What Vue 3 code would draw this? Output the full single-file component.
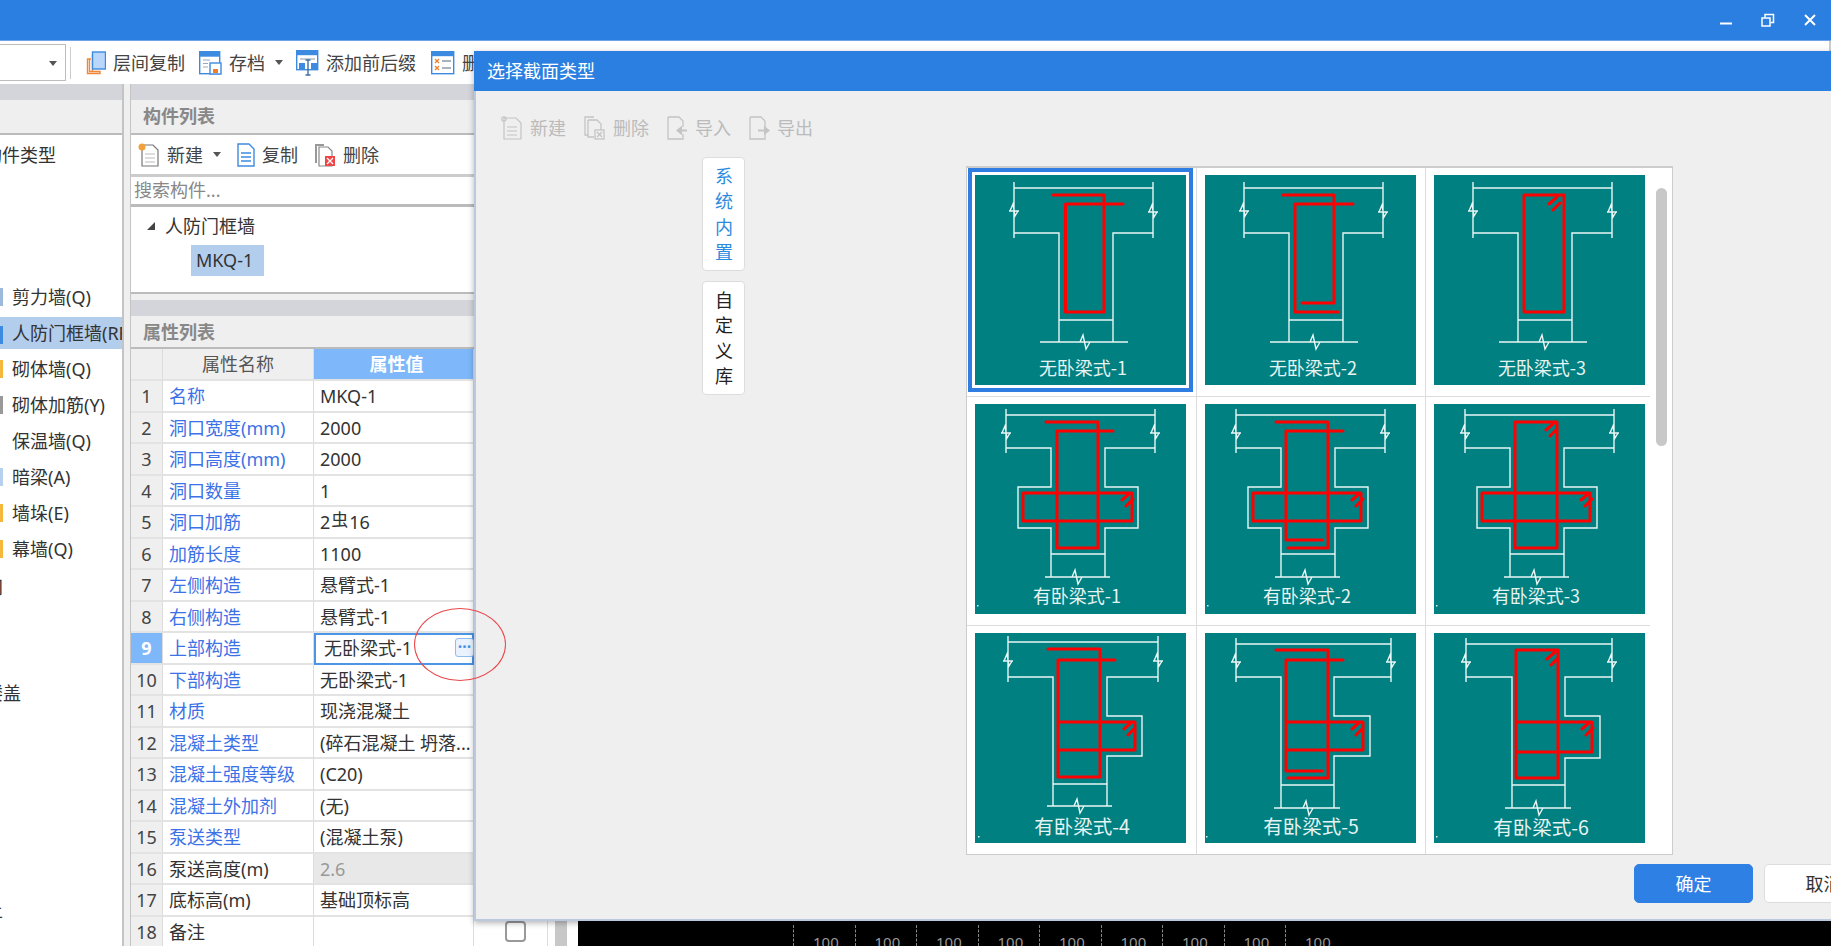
<template>
  <div class="app">
    <!-- 顶部标题栏 -->
    <header class="topbar">
      <div class="win-btns">
        <svg width="14" height="14" viewBox="0 0 14 14"><path d="M1 10.500h12" stroke="#fff" stroke-width="2" /></svg>
        <svg width="14" height="14" viewBox="0 0 14 14" fill="none" stroke="#fff" stroke-width="1.500"><rect x="1" y="5" width="8" height="8" /><path d="M4 4.500V1.500h8.500v8H9.500" /></svg>
        <svg width="14" height="14" viewBox="0 0 14 14"><path d="M2 2l10 10M12 2L2 12" stroke="#fff" stroke-width="2" /></svg>
      </div>
    </header>

    <div class="toolbar">
      <div class="combo"><i class="caret"></i></div>
      <span class="tool-sep"></span>
      <div class="tool first">
        <svg width="20" height="24" viewBox="0 0 20 24" fill="none"><path d="M5 8H1.500v14.500H14v-2H3.500V8zM6.500 4v16" stroke="#f0883a" stroke-width="1.400" /><rect x="6.500" y="1" width="13" height="17" fill="#b9d6fb" stroke="#3d8be0" stroke-width="1.400" /></svg>
        <span>层间复制</span>
      </div>
      <div class="tool">
        <svg width="23" height="24" viewBox="0 0 23 24"><rect x=".7" y=".7" width="20" height="22" fill="#fff" stroke="#3d8be0" stroke-width="1.400" /><rect x=".7" y=".7" width="20" height="5" fill="#3d8be0" /><path d="M4 9h7M4 12.500h5M4 16h5" stroke="#9aa7b5" /><rect x="11" y="12" width="11" height="11" fill="#fff" stroke="#3d8be0" stroke-width="1.400" /><rect x="14" y="18" width="5" height="4" fill="#ef7d2c" /></svg>
        <span>存档</span>
        <i class="caret small-gap"></i>
      </div>
      <div class="tool tight">
        <svg width="23" height="26" viewBox="0 0 23 26"><rect x=".7" y=".7" width="21" height="19" fill="#fff" stroke="#3d8be0" stroke-width="1.400" /><rect x=".7" y=".7" width="21" height="4.500" fill="#3d8be0" /><path d="M4 9h15" stroke="#8b9aa8" /><rect x="3" y="13" width="6" height="7" fill="#3d8be0" /><rect x="15" y="13" width="7" height="7" fill="#3d8be0" /><path d="M12 10v15M9.500 25h5M9.500 10h5" stroke="#3d6fa8" stroke-width="1.400" /></svg>
        <span>添加前后缀</span>
      </div>
      <div class="tool">
        <svg width="24" height="24" viewBox="0 0 24 24"><rect x=".7" y=".7" width="22" height="22" fill="#fff" stroke="#3d8be0" stroke-width="1.400" /><rect x=".7" y=".7" width="22" height="4.500" fill="#3d8be0" /><path d="M4 8l4 4M8 8l-4 4M4 15l4 4M8 15l-4 4" stroke="#ef7d2c" stroke-width="1.300" /><path d="M11 10h9M11 17h9" stroke="#8b9aa8" stroke-width="1.300" /></svg>
        <span>删</span>
      </div>
    </div>

    <main class="main">
      <!-- 左侧：构件类型 -->
      <aside class="type-panel">
        <div class="band"></div>
        <div class="panel-head"></div>
        <div class="type-list">
          <div class="type-root">构件类型</div>
          <div v-for="t in types" :key="t.name" :class="['type-row', { on: t.on }]">
            <i class="type-mark" :style="{ background: t.color }"></i>{{ t.name }}
          </div>
          <div class="cut cut-a">间</div>
          <div class="cut cut-b">楼盖</div>
          <div class="cut cut-c">土</div>
        </div>
      </aside>
      <div class="splitter"></div>

      <!-- 中间：构件列表 + 属性列表 -->
      <section class="mid">
        <div class="band"></div>
        <div class="panel-head title">构件列表</div>
        <div class="mid-tools">
          <div class="tool">
            <svg width="22" height="24" viewBox="0 0 22 24" fill="none"><path d="M4 2h11l5 5v16H4z" fill="#fff" stroke="#777" stroke-width="1.200" /><path d="M7 11h10M7 15h10M7 19h10" stroke="#bbb" /><circle cx="4" cy="4" r="3.500" fill="#f2a23c" /></svg>
            <span>新建</span>
            <i class="caret small-gap"></i>
          </div>
          <div class="tool">
            <svg width="18" height="24" viewBox="0 0 18 24" fill="none"><path d="M1 4V1h11l5 5v17H1z" fill="#fff" stroke="#3d8be0" stroke-width="1.400" /><path d="M4 10h10M4 14h10M4 18h10" stroke="#3d8be0" stroke-width="1.300" /></svg>
            <span>复制</span>
          </div>
          <div class="tool">
            <svg width="22" height="24" viewBox="0 0 22 24" fill="none"><path d="M1 1h9v2H3v17H1z" fill="#999" /><path d="M5 4h9l4 4v15H5z" fill="#fff" stroke="#888" stroke-width="1.200" /><rect x="11" y="13" width="10" height="10" fill="#e44" /><path d="M13 15l6 6M19 15l-6 6" stroke="#fff" stroke-width="1.300" /></svg>
            <span>删除</span>
          </div>
        </div>
        <div class="search">搜索构件...</div>
        <div class="tree">
          <div class="tree-root"><i class="tree-arrow"></i>人防门框墙</div>
          <div class="tree-leaf"><span>MKQ-1</span></div>
        </div>
        <div class="gap"></div>
        <div class="band"></div>
        <div class="panel-head title props">属性列表</div>
        <div class="prop-table">
          <div class="prop-row head">
            <div class="num"></div>
            <div class="name">属性名称</div>
            <div class="val">属性值</div>
          </div>
          <div v-for="(p, i) in props" :key="p.name" :class="['prop-row', { active: i === 8, locked: p.locked }]">
            <div class="num">{{ i + 1 }}</div>
            <div :class="['name', { link: !p.plain }]">{{ p.name }}</div>
            <div class="val">
              <template v-if="p.rebar">2<span class="rebar">虫</span>16</template>
              <template v-else>{{ p.val }}</template>
              <span v-if="i === 8" class="more">···</span>
            </div>
          </div>
        </div>
      </section>

      <!-- 后面被弹窗挡住的区域，只露出底部一条 -->
      <section class="work">
        <div class="check-col"><span class="check"></span></div>
        <div class="scroll-col"><span></span></div>
        <div class="canvas">
          <div class="ruler">
            <span v-for="n in 9" :key="n">100</span>
          </div>
        </div>
      </section>
    </main>

    <!-- 选择截面类型弹窗 -->
    <div class="dialog">
      <div class="dialog-title">选择截面类型</div>
      <div class="dialog-tools">
        <div class="dtool">
          <svg width="22" height="24" viewBox="0 0 22 24" fill="none" stroke="#c4c4c4" stroke-width="1.200"><path d="M3 2h12l5 5v16H3z" /><path d="M6 11h10M6 15h10M6 19h10" /><circle cx="3" cy="3" r="2.200" /></svg>
          <span>新建</span>
        </div>
        <div class="dtool">
          <svg width="22" height="24" viewBox="0 0 22 24" fill="none" stroke="#c4c4c4" stroke-width="1.300"><path d="M10 1H1v18h3" /><path d="M4 4h9l4 4v6M10 21H4V4" /><rect x="11" y="14" width="9" height="9" /><path d="M13 16l5 5M18 16l-5 5" /></svg>
          <span>删除</span>
        </div>
        <div class="dtool">
          <svg width="21" height="24" viewBox="0 0 21 24" fill="none" stroke="#c4c4c4" stroke-width="1.300"><path d="M1 1h11l4 4v6M16 18v5H1V1" /><path d="M20 14.500h-7" stroke-width="2" /><path d="M15 10.500l-5 4 5 4" fill="#c4c4c4" /></svg>
          <span>导入</span>
        </div>
        <div class="dtool">
          <svg width="21" height="24" viewBox="0 0 21 24" fill="none" stroke="#c4c4c4" stroke-width="1.300"><path d="M1 1h11l4 4v6M16 18v5H1V1" /><path d="M9 14.500h7" stroke-width="2" /><path d="M15 10.500l5 4-5 4" fill="#c4c4c4" /></svg>
          <span>导出</span>
        </div>
      </div>

      <div class="dialog-body">
        <div class="lib-tabs">
          <div class="lib-tab on">系统内置</div>
          <div class="lib-tab">自定义库</div>
        </div>
        <div class="gallery">
          <div class="gallery-grid">
            <div v-for="(c, i) in cards" :key="c.label" class="cell">
              <svg :class="['thumb', { picked: i === 0 }]" width="211" height="210" viewBox="0 0 211 210">
                <rect width="211" height="210" fill="#008080" />
                <path :d="c.white" fill="none" stroke="#e9f6f5" stroke-width="1.400" />
                <path :d="c.red" fill="none" stroke="#f00" stroke-width="3" stroke-linejoin="round" stroke-linecap="round" />
                <rect v-if="c.dot" :x="c.dot[0]" :y="c.dot[1]" width="1.500" height="1.500" fill="#dff0ef" />
                <text :x="c.tx" :y="c.ty" :class="['thumb-label', { wide: i > 5 }]" text-anchor="middle">{{ c.label }}</text>
              </svg>
            </div>
          </div>
          <div class="gallery-track"><span></span></div>
        </div>
      </div>

      <div class="dialog-foot">
        <button class="btn primary">确定</button>
        <button class="btn">取消</button>
      </div>
    </div>

    <!-- 截图上手工画的红圈 -->
    <div class="mark-circle"></div>
  </div>
</template>

<script setup>
const types = [
  { name: '剪力墙(Q)', color: '#9db9dc' },
  { name: '人防门框墙(RFM)', color: '#3d8be0', on: true },
  { name: '砌体墙(Q)', color: '#f5b83d' },
  { name: '砌体加筋(Y)', color: '#999' },
  { name: '保温墙(Q)', color: 'transparent' },
  { name: '暗梁(A)', color: '#b6d0ee' },
  { name: '墙垛(E)', color: '#f5b83d' },
  { name: '幕墙(Q)', color: '#f5b83d' }
]

const props = [
  { name: '名称', val: 'MKQ-1' },
  { name: '洞口宽度(mm)', val: '2000' },
  { name: '洞口高度(mm)', val: '2000' },
  { name: '洞口数量', val: '1' },
  { name: '洞口加筋', rebar: true },
  { name: '加筋长度', val: '1100' },
  { name: '左侧构造', val: '悬臂式-1' },
  { name: '右侧构造', val: '悬臂式-1' },
  { name: '上部构造', val: '无卧梁式-1' },
  { name: '下部构造', val: '无卧梁式-1' },
  { name: '材质', val: '现浇混凝土' },
  { name: '混凝土类型', val: '(碎石混凝土 坍落...' },
  { name: '混凝土强度等级', val: '(C20)' },
  { name: '混凝土外加剂', val: '(无)' },
  { name: '泵送类型', val: '(混凝土泵)' },
  { name: '泵送高度(m)', val: '2.6', plain: true, locked: true },
  { name: '底标高(m)', val: '基础顶标高', plain: true },
  { name: '备注', val: '', plain: true }
]

// 折断线符号
const sideBreak = (x, y) => `M${x - 5} ${y + 2}H${x + 5}M${x - 4} ${y + 2}L${x - 1} ${y - 5}L${x + 1} ${y + 7}L${x + 4} ${y + 2}`
const footBreak = (x, y) => `M${x - 5} ${y}L${x - 2} ${y - 7}L${x + 1} ${y + 7}L${x + 5} ${y}`
const hook = (x, y) => `M${x - 8} ${y + 7}L${x} ${y}M${x - 4} ${y + 13}L${x + 3} ${y + 6}`

const teeWhite = 'M39 7V63M39 13H178M178 7V63M39 58H84V167M178 58H138V167M84 145H138M65 167H153' + sideBreak(39, 34) + sideBreak(178, 35) + footBreak(110, 167)
const crossWhite = 'M31 5V49M31 11H180M180 5V49M31 44H76V83H43V124H76V173M180 44H130V83H163V124H130V173M76 150H130M70 173H135' + sideBreak(31, 27) + sideBreak(180, 27) + footBreak(102, 173)

const cards = [
  { label: '无卧梁式-1', tx: 108, ty: 200, white: teeWhite, red: 'M78 20H129V137H90.500V29H148' },
  { label: '无卧梁式-2', tx: 108, ty: 200, white: teeWhite, red: 'M78 20H129V128H97M148 29H90V137H133' },
  { label: '无卧梁式-3', tx: 108, ty: 200, white: teeWhite, red: 'M90 20H130V137H90Z' + hook(123, 22) },
  { label: '有卧梁式-1', tx: 102, ty: 199, dot: [2, 201], white: crossWhite, red: 'M71 18H123V144H82V27H138M48 89H157V117H48Z' + hook(155, 89) },
  { label: '有卧梁式-2', tx: 102, ty: 199, dot: [2, 201], white: crossWhite, red: 'M71 18H123V144H83M138 27H81V136H117M48 89H156V117H48Z' + hook(155, 89) },
  { label: '有卧梁式-3', tx: 102, ty: 199, dot: [2, 201], white: crossWhite, red: 'M81 18H123V144H81ZM48 89H156V117H48Z' + hook(120, 19) + hook(155, 89) },
  {
    label: '有卧梁式-4', tx: 107, ty: 201, dot: [3, 203],
    white: 'M33 3V49M33 9H183M183 3V49M33 44H78V173M183 44H132V83H167V123H132V173M78 151H132M72 173H137' + sideBreak(33, 26) + sideBreak(183, 26) + footBreak(104, 173),
    red: 'M73 16H125V144H83V27H140M83 89H160V117H83' + hook(157, 89)
  },
  {
    label: '有卧梁式-5', tx: 106, ty: 201, dot: [1, 203],
    white: 'M31 5V49M31 11H186M186 5V49M31 44H76V175M186 44H129V83H165V123H129V175M76 152H129M69 175H135' + sideBreak(31, 27) + sideBreak(186, 27) + footBreak(103, 175),
    red: 'M71 17H123V145H83M138 27H81V138H117M81 89H158V117H81' + hook(155, 89)
  },
  {
    label: '有卧梁式-6', tx: 107, ty: 202, dot: [2, 203],
    white: 'M32 5V49M32 11H178M178 5V49M32 44H78V175M178 44H131V83H166V125H131V175M78 152H131M71 175H137' + sideBreak(32, 27) + sideBreak(178, 27) + footBreak(104, 175),
    red: 'M82 17H124V145H82ZM82 89H158V119H82' + hook(121, 19) + hook(156, 89)
  }
]
</script>

<style scoped>
.app {
  position: relative;
  display: flex;
  flex-direction: column;
  width: 1831px;
  height: 946px;
  overflow: hidden;
  background: #fff;
  color: #333;
  font-family: "Noto Sans", "Noto Sans CJK SC", sans-serif;
  font-size: 18px;
  line-height: 1;
}

.topbar {
  flex: 0 0 41px;
  display: flex;
  justify-content: flex-end;
  background: #2b7fe0;
  border-bottom: 1px solid #6ea4e6;
  box-sizing: border-box;
}

.win-btns {
  display: flex;
  gap: 28px;
  padding: 13px 14px 0 0;
  align-items: flex-start;
}

.toolbar {
  flex: 0 0 43px;
  display: flex;
  align-items: center;
  background: #fff;
  border-right: 2px solid #ccc;
  box-sizing: border-box;
  white-space: nowrap;
}

.combo {
  position: relative;
  width: 66px;
  height: 37px;
  border: 1px solid #bdbdbd;
  border-left: none;
  box-sizing: border-box;
  flex: none;
}

.combo .caret {
  position: absolute;
  top: 16px;
  left: 49px;
}

.caret {
  display: inline-block;
  width: 0;
  height: 0;
  border: 4px solid transparent;
  border-top: 5px solid #555;
  border-bottom: none;
}

.small-gap {
  margin-left: 3px;
}

.tool-sep {
  width: 1px;
  height: 32px;
  margin: 0 6px 0 4px;
  background: #ccc;
  flex: none;
}

.tool {
  display: flex;
  align-items: center;
  gap: 7px;
  padding: 0 7px;
  flex: none;
  height: 36px;
  color: #444;
}

.tool.first {
  padding-left: 9px;
}

.tool.tight {
  padding-left: 6px;
  padding-right: 8px;
}

.main {
  flex: 1;
  display: flex;
  min-height: 0;
  overflow: hidden;
}

.band {
  flex: none;
  height: 16px;
  background: #d3d5da;
}

.panel-head {
  flex: none;
  height: 33px;
  background: #efefef;
  border-bottom: 2px solid #bbb;
  box-sizing: content-box;
}

.type-panel {
  flex: 0 0 122px;
  display: flex;
  flex-direction: column;
  overflow: hidden;
  border-right: 2px solid #c4c4c4;
  box-sizing: content-box;
}

.type-list {
  flex: 1;
  position: relative;
  overflow: hidden;
  padding-left: 12px;
  white-space: nowrap;
}

.type-root {
  margin: 10px 0 0 -28px;
  height: 134px;
  line-height: 20px;
}

.type-row {
  position: relative;
  height: 36px;
  line-height: 36px;
  margin-left: -12px;
  padding-left: 12px;
}

.type-row.on {
  height: 32px;
  line-height: 32px;
  margin-top: 2px;
  margin-bottom: 2px;
  background: #b3cdec;
}

.type-mark {
  position: absolute;
  left: 0;
  top: 9px;
  width: 3px;
  height: 18px;
}

.cut {
  position: absolute;
}

.cut-a { left: -15px; top: 443px; }
.cut-b { left: -15px; top: 549px; }
.cut-c { left: -15px; top: 766px; }

.splitter {
  flex: 0 0 6px;
  background: #efefef;
}

.mid {
  flex: 0 0 344px;
  display: flex;
  flex-direction: column;
  border-left: 1px solid #c4c4c4;
  box-sizing: border-box;
  overflow: hidden;
}

.mid > * {
  flex: none;
}

.panel-head.title {
  padding-left: 12px;
  line-height: 33px;
  font-weight: 700;
  color: #888;
}

.panel-head.props {
  height: 31px;
}

.mid-tools {
  height: 39px;
  display: flex;
  align-items: center;
  padding-left: 0;
  border-bottom: 3px solid #ccc;
}

.mid-tools .tool {
  padding: 0 9px 0 7px;
}

.search {
  height: 27px;
  line-height: 27px;
  padding-left: 3px;
  color: #888;
  border-bottom: 3px solid #bbb;
}

.tree {
  height: 85px;
  border-bottom: 2px solid #bbb;
  box-sizing: content-box;
}

.tree-root {
  display: flex;
  align-items: center;
  height: 38px;
  padding-left: 16px;
}

.tree-arrow {
  width: 0;
  height: 0;
  margin-right: 10px;
  border-left: 8px solid transparent;
  border-bottom: 8px solid #444;
}

.tree-leaf {
  padding-left: 60px;
}

.tree-leaf span {
  display: inline-block;
  width: 73px;
  height: 31px;
  line-height: 31px;
  padding-left: 5px;
  box-sizing: border-box;
  background: #b3cdec;
}

.gap {
  height: 6px;
  background: #efefef;
}

.prop-row {
  display: grid;
  grid-template-columns: 32px 151px 1fr;
  height: 31.500px;
  line-height: 30px;
  white-space: nowrap;
}

.prop-row.head {
  height: 32px;
}

.prop-row > div {
  border-bottom: 2px solid #e3e3e3;
  border-right: 1px solid #dcdcdc;
  box-sizing: border-box;
  overflow: hidden;
}

.num {
  background: #efefef;
  text-align: center;
  color: #444;
}

.name {
  padding-left: 6px;
}

.name.link {
  color: #3c72e6;
}

.val {
  position: relative;
  padding-left: 6px;
}

.rebar {
  font-size: 17px;
  position: relative;
  top: -3px;
  margin: 0 1px;
}

.head .num,
.head .name {
  background: #efefef;
}

.head .name {
  text-align: center;
  padding-left: 0;
  color: #555;
}

.head .val {
  background: #7eb8fa;
  color: #fff;
  font-weight: 700;
  text-align: center;
}

.active .num {
  background: #7eb8fa;
  color: #fff;
  font-weight: 700;
}

.prop-row.active .val {
  border: 2px solid #4b94e6;
  padding-left: 8px;
  line-height: 26px;
  overflow: visible;
}

.more {
  position: absolute;
  left: 139px;
  top: 3px;
  width: 19px;
  height: 19px;
  line-height: 15px;
  text-align: center;
  font-size: 16px;
  font-weight: 700;
  color: #4b94e6;
  background: #eaf3fd;
  border: 1px solid #8fbdf0;
  border-radius: 3px;
  box-sizing: border-box;
}

.locked .val {
  background: #e8e8e8;
  color: #999;
}

.work {
  flex: 1;
  display: flex;
  min-width: 0;
}

.check-col {
  flex: 0 0 73px;
  position: relative;
  border-right: 1px solid #ddd;
}

.check {
  position: absolute;
  left: 31px;
  bottom: 4px;
  width: 21px;
  height: 21px;
  box-sizing: border-box;
  border: 2px solid #999;
  border-radius: 4px;
}

.scroll-col {
  flex: 0 0 30px;
  padding-left: 7px;
  box-sizing: border-box;
  display: flex;
}

.scroll-col span {
  width: 12px;
  background: #c8c8c8;
}

.canvas {
  flex: 1;
  display: flex;
  align-items: flex-end;
  background: #000;
}

.ruler {
  display: flex;
  margin-left: 215px;
}

.ruler span {
  width: 61.500px;
  height: 21px;
  box-sizing: border-box;
  padding: 10px 0 0 19px;
  border-left: 1px dashed #888;
  color: #999;
  font-size: 15px;
  line-height: 15px;
}

.dialog {
  position: absolute;
  left: 474px;
  top: 51px;
  width: 1400px;
  height: 870px;
  display: flex;
  flex-direction: column;
  background: #efefef;
  border-left: 2px solid #bcc8de;
  border-bottom: 2px solid #bcc8de;
  box-sizing: border-box;
  box-shadow: 0 2px 6px rgba(0, 0, 0, .3);
}

.dialog-title {
  flex: 0 0 40px;
  margin-left: -2px;
  padding-left: 13px;
  line-height: 40px;
  color: #fff;
  background: #2b7fe0;
}

.dialog-tools {
  flex: 0 0 48px;
  display: flex;
  align-items: flex-start;
  gap: 18px;
  padding: 25px 0 0 25px;
  box-sizing: border-box;
  color: #bbb;
}

.dtool {
  display: flex;
  align-items: center;
  gap: 7px;
}

.dialog-body {
  flex: 0 0 689px;
  display: flex;
  align-items: flex-start;
  padding: 0;
}

.lib-tabs {
  display: flex;
  flex-direction: column;
  gap: 10px;
  margin: 17px 0 0 226px;
}

.lib-tab {
  width: 43px;
  height: 114px;
  box-sizing: border-box;
  padding: 6px 12px 0;
  line-height: 25.300px;
  text-align: center;
  background: #fff;
  border: 1px solid #ddd;
  border-radius: 4px;
  color: #222;
}

.lib-tab.on {
  color: #2b8be0;
}

.gallery {
  position: relative;
  flex: none;
  width: 707px;
  height: 689px;
  margin: 26px 0 0 221px;
  box-sizing: border-box;
  background: #fff;
  border: 1px solid #ccc;
  border-top-width: 2px;
  overflow: hidden;
}

.gallery-grid {
  display: grid;
  grid-template-columns: repeat(3, 229.500px);
  grid-auto-rows: 229px;
}

.cell {
  padding: 7px 0 0 8px;
  box-sizing: border-box;
  border-right: 1px solid #ddd;
  border-bottom: 1px solid #ddd;
}

.thumb {
  display: block;
}

.thumb.picked {
  outline: 4px solid #2f7de1;
  outline-offset: 3px;
}

.thumb-label {
  font-family: "Noto Sans CJK SC", sans-serif;
  font-size: 18px;
  fill: #e6f3f3;
}

.thumb-label.wide {
  font-size: 19.500px;
}

.gallery-track {
  position: absolute;
  right: 0;
  top: 0;
  width: 22px;
  height: 100%;
  background: #fff;
}

.gallery-track span {
  position: absolute;
  left: 6px;
  top: 20px;
  width: 11px;
  height: 258px;
  border-radius: 6px;
  background: #c8c8c8;
}

.dialog-foot {
  display: flex;
  gap: 11px;
  margin: 9px 0 0 1158px;
}

.btn {
  flex: none;
  width: 119px;
  height: 39px;
  padding: 0;
  font: inherit;
  color: #333;
  background: #fff;
  border: 1px solid #ddd;
  border-radius: 5px;
}

.btn.primary {
  color: #fff;
  background: #2f80e4;
  border-color: #2f80e4;
}

.mark-circle {
  position: absolute;
  left: 414px;
  top: 608px;
  width: 92px;
  height: 73px;
  box-sizing: border-box;
  border: 1px solid #e8484c;
  border-radius: 50%;
}
</style>

<style>
html, body {
  margin: 0;
  background: #fff;
}
</style>
